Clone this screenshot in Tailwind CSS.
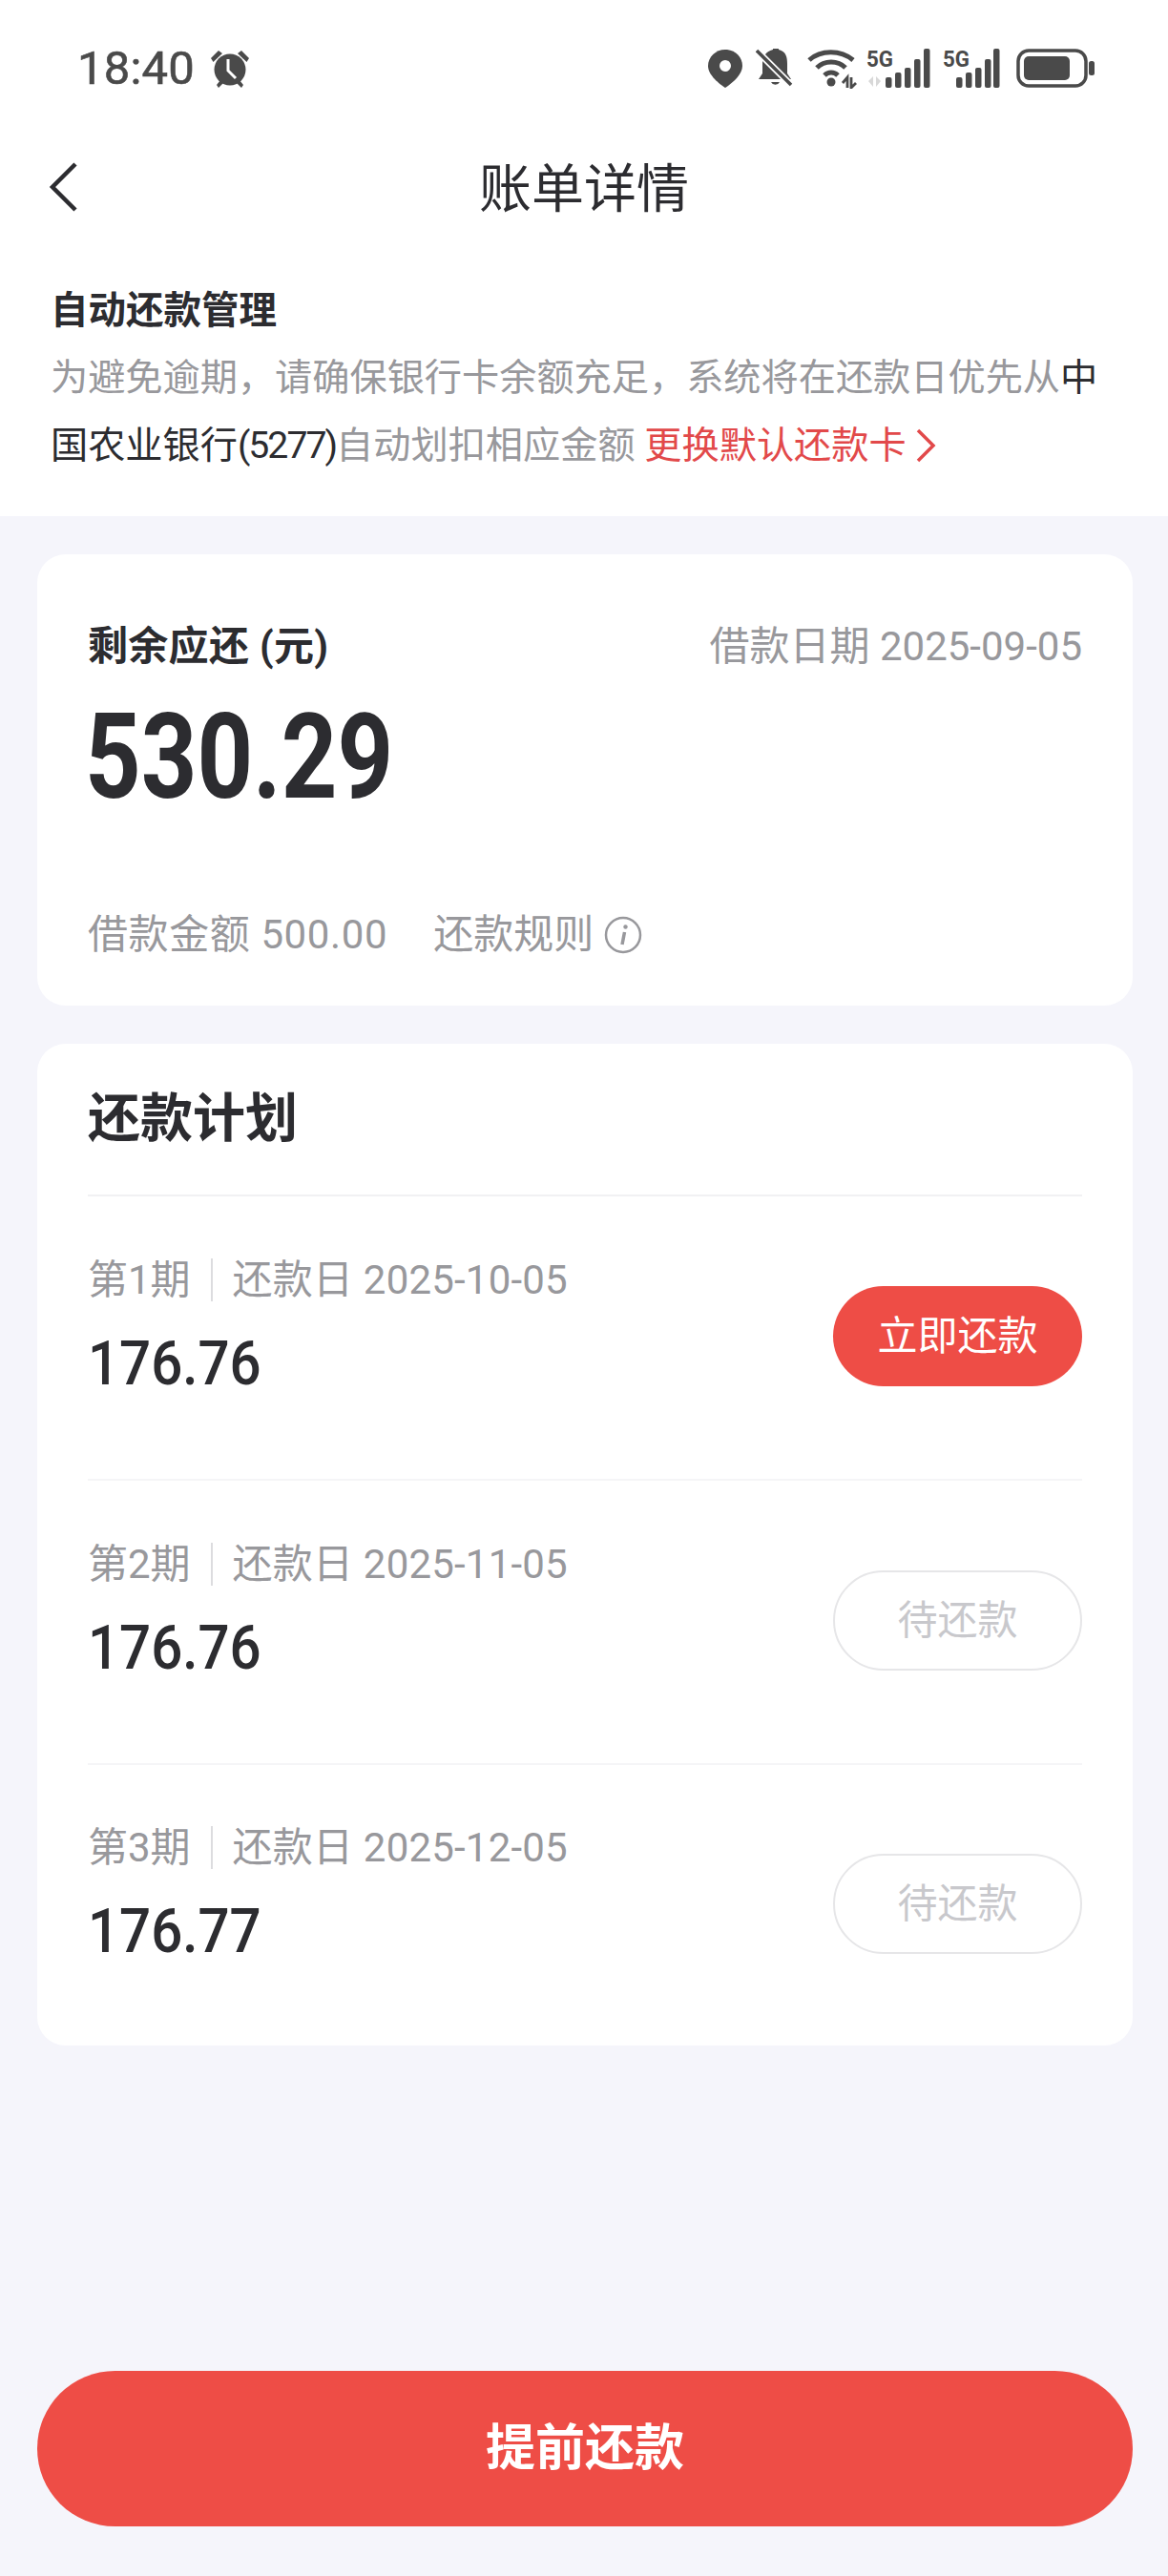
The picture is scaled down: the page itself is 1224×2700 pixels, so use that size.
<!DOCTYPE html>
<html lang="zh">
<head>
<meta charset="utf-8">
<script src="https://cdn.jsdelivr.net/npm/@tailwindcss/browser@4"></script>
</head>
<body class="bg-[#f5f5fb]">
<div class="w-[1224px] h-[2700px] flex flex-col bg-[#f5f5fb] text-[#2c2c30] font-['Roboto','Noto_Sans_CJK_SC',sans-serif]">
  <div class="bg-white">
    <div class="h-[143px] flex items-center justify-between pl-[81px] pr-[77px] text-[#4a4a4a]">
      <div class="flex items-center gap-[17px]">
        <span class="text-[49px] leading-none tracking-[0.2px] [-webkit-text-stroke:0.6px_#4a4a4a]">18:40</span>
        <svg class="w-[40px] h-[40px]" viewBox="0 0 40 40" fill="#4a4a4a"><path d="M8 1 L0 9 L2.5 13 L12 4 Z M32 1 L40 9 L37.5 13 L28 4 Z"/><circle cx="20" cy="21" r="16.5"/><path d="M6 37 L10 32 L13 35 L8 40 Z M34 37 L30 32 L27 35 L32 40 Z"/><path d="M18 10 L18 22 L26 30" fill="none" stroke="#fff" stroke-width="3"/></svg>
      </div>
      <div class="flex items-center">
        <svg class="w-[36px] h-[40px]" viewBox="0 0 36 40"><path d="M18 0 C8 0 0 7.6 0 17 C0 27 12 36 18 40 C24 36 36 27 36 17 C36 7.6 28 0 18 0Z" fill="#4a4a4a"/><circle cx="18" cy="17" r="6" fill="#fff"/></svg>
        <svg class="w-[40px] h-[42px] ml-[14px]" viewBox="0 0 40 42"><path d="M18 1 a3 3 0 0 1 6 0 C32 3 33 9 33 16 L33 26 L37 32 L3 32 L7 26 L7 16 C7 9 10 3 18 1 Z" fill="#4a4a4a"/><path d="M16 35 a5 5 0 0 0 9 0 Z" fill="#4a4a4a"/><path d="M1 2 L37 38" stroke="#fff" stroke-width="7"/><path d="M1 2 L37 38" stroke="#4a4a4a" stroke-width="3.5"/></svg>
        <svg class="w-[52px] h-[42px] ml-[14px]" viewBox="0 0 52 42" fill="none" stroke="#4a4a4a" stroke-width="5"><path d="M2 12 C14 1 35 1 48 12"/><path d="M10 20 C18 12 32 12 40 20"/><path d="M18 28 C22 24 28 24 32 28"/><circle cx="25" cy="35" r="4.5" fill="#4a4a4a" stroke="none"/><path d="M37 36 L42 30 L42 41 M46 30 L46 41 L51 36" stroke-width="2.8"/></svg>
        <svg class="w-[67px] h-[42px] ml-[10px] overflow-visible" viewBox="0 0 67 42"><text x="0" y="19" font-size="24" font-weight="700" fill="#4a4a4a" textLength="28" lengthAdjust="spacingAndGlyphs">5G</text><path d="M7 29 L2 34 L7 40 Z M10 29 L15 34 L10 40 Z" fill="#d8d8d8"/><g fill="#4a4a4a"><rect x="20" y="30" width="6.5" height="11" rx="2"/><rect x="30" y="25" width="6.5" height="16" rx="2"/><rect x="40" y="20" width="6.5" height="21" rx="2"/><rect x="50" y="11" width="6.5" height="30" rx="2"/><rect x="60" y="0" width="6.5" height="41" rx="2"/></g></svg>
        <svg class="w-[60px] h-[42px] ml-[13px] overflow-visible" viewBox="0 0 60 42"><text x="0" y="19" font-size="24" font-weight="700" fill="#4a4a4a" textLength="28" lengthAdjust="spacingAndGlyphs">5G</text><g fill="#4a4a4a"><rect x="14" y="30" width="6.5" height="11" rx="2"/><rect x="24" y="25" width="6.5" height="16" rx="2"/><rect x="34" y="20" width="6.5" height="21" rx="2"/><rect x="44" y="11" width="6.5" height="30" rx="2"/><rect x="53" y="0" width="6.5" height="41" rx="2"/></g></svg>
        <svg class="w-[82px] h-[41px] ml-[17px]" viewBox="0 0 82 41"><rect x="2" y="2" width="71" height="37" rx="11" fill="none" stroke="#4a4a4a" stroke-width="3.5"/><rect x="8" y="8" width="48" height="25" rx="5" fill="#4a4a4a"/><rect x="76" y="13" width="6" height="15" rx="2.5" fill="#4a4a4a"/></svg>
      </div>
    </div>
    <div class="relative h-[108px] flex items-center justify-center">
      <svg class="absolute left-[50px] top-[26px] w-[34px] h-[54px]" viewBox="0 0 34 54" fill="none" stroke="#2c2c30" stroke-width="4.5"><path d="M29 3 L5 27 L29 51"/></svg>
      <span class="text-[55px] leading-none mt-[2px]">账单详情</span>
    </div>
    <div class="pl-[53px] pr-[53px] pt-[39px] pb-[38px]">
      <div class="text-[39.5px] leading-[71px] font-bold">自动还款管理</div>
      <p class="text-[39.2px] leading-[71px] text-[#98989c]">为避免逾期，请确保银行卡余额充足，系统将在还款日优先从<span class="text-[#2c2c30]">中国农业银行<span class="tracking-[-2px]">(5277)</span></span>自动划扣相应金额 <span class="text-[#e2494a]">更换默认还款卡</span><svg class="inline-block w-[24px] h-[36px] ml-[8px] align-[-5px]" viewBox="0 0 24 36" fill="none" stroke="#e2494a" stroke-width="3.5"><path d="M4 2 L20 18 L4 34"/></svg></p>
    </div>
  </div>

  <section class="ml-[39px] mr-[37px] mt-[40px] h-[473px] bg-white rounded-[30px] px-[53px] pt-[68px] flex flex-col">
    <div class="flex items-center justify-between h-[58px]">
      <span class="text-[42px] font-bold leading-none tracking-[0.3px]">剩余应还 (元)</span>
      <span class="text-[42px] leading-none text-[#98989c]">借款日期 2025-09-05</span>
    </div>
    <div class="mt-[22px] h-[130px] flex items-center">
      <span class="inline-block -ml-[3px] text-[124px] leading-none font-bold origin-left scale-x-[0.825]">530.29</span>
    </div>
    <div class="mt-[100px] flex items-center text-[42px] leading-none text-[#98989c]">
      <span class="tracking-[0.6px]">借款金额 500.00</span>
      <span class="ml-[48px]">还款规则</span>
      <svg class="w-[40px] h-[40px] ml-[11px]" viewBox="0 0 40 40" fill="none" stroke="#98989c" stroke-width="2.5"><circle cx="20" cy="20" r="18"/><path d="M21.5 17 L19 30" stroke-width="3.5"/><circle cx="22.5" cy="11.5" r="2.2" fill="#98989c" stroke="none"/></svg>
    </div>
  </section>

  <section class="ml-[39px] mr-[37px] mt-[40px] h-[1050px] bg-white rounded-[30px] px-[53px]">
    <div class="h-[160px] border-b-2 border-[#f1f1f3] flex items-center pb-[2px] text-[55px] font-bold leading-none">还款计划</div>

    <div class="h-[298px] flex items-center justify-between border-b-2 border-[#f5f5f7]">
      <div class="mb-[26px] pt-[3px]">
        <div class="flex items-center text-[42px] leading-none text-[#98989c]"><span>第1期</span><span class="w-[2px] h-[45px] bg-[#dcdcdf] mx-[21px]"></span><span class="tracking-[0.2px]">还款日 2025-10-05</span></div>
        <div class="mt-[34px] text-[64px] leading-none font-medium inline-block origin-left scale-x-[0.91]">176.76</div>
      </div>
      <button class="w-[261px] h-[105px] mb-[3px] rounded-full bg-[#ee4d46] text-white text-[42px] leading-none">立即还款</button>
    </div>

    <div class="h-[298px] flex items-center justify-between border-b-2 border-[#f5f5f7]">
      <div class="mb-[26px] pt-[3px]">
        <div class="flex items-center text-[42px] leading-none text-[#98989c]"><span>第2期</span><span class="w-[2px] h-[45px] bg-[#dcdcdf] mx-[21px]"></span><span class="tracking-[0.2px]">还款日 2025-11-05</span></div>
        <div class="mt-[34px] text-[64px] leading-none font-medium inline-block origin-left scale-x-[0.91]">176.76</div>
      </div>
      <button class="w-[261px] h-[105px] mb-[3px] rounded-full border-2 border-[#e6e6e8] text-[#c8c8cc] text-[42px] leading-none">待还款</button>
    </div>

    <div class="h-[294px] flex items-center justify-between">
      <div class="mb-[26px] pt-[3px]">
        <div class="flex items-center text-[42px] leading-none text-[#98989c]"><span>第3期</span><span class="w-[2px] h-[45px] bg-[#dcdcdf] mx-[21px]"></span><span class="tracking-[0.2px]">还款日 2025-12-05</span></div>
        <div class="mt-[34px] text-[64px] leading-none font-medium inline-block origin-left scale-x-[0.91]">176.77</div>
      </div>
      <button class="w-[261px] h-[105px] mb-[3px] rounded-full border-2 border-[#e6e6e8] text-[#c8c8cc] text-[42px] leading-none">待还款</button>
    </div>
  </section>

  <button class="ml-[39px] mr-[37px] mt-auto mb-[52px] h-[163px] rounded-full bg-[#ee4d46] text-white text-[52px] font-bold leading-none">提前还款</button>
</div>
</body>
</html>
